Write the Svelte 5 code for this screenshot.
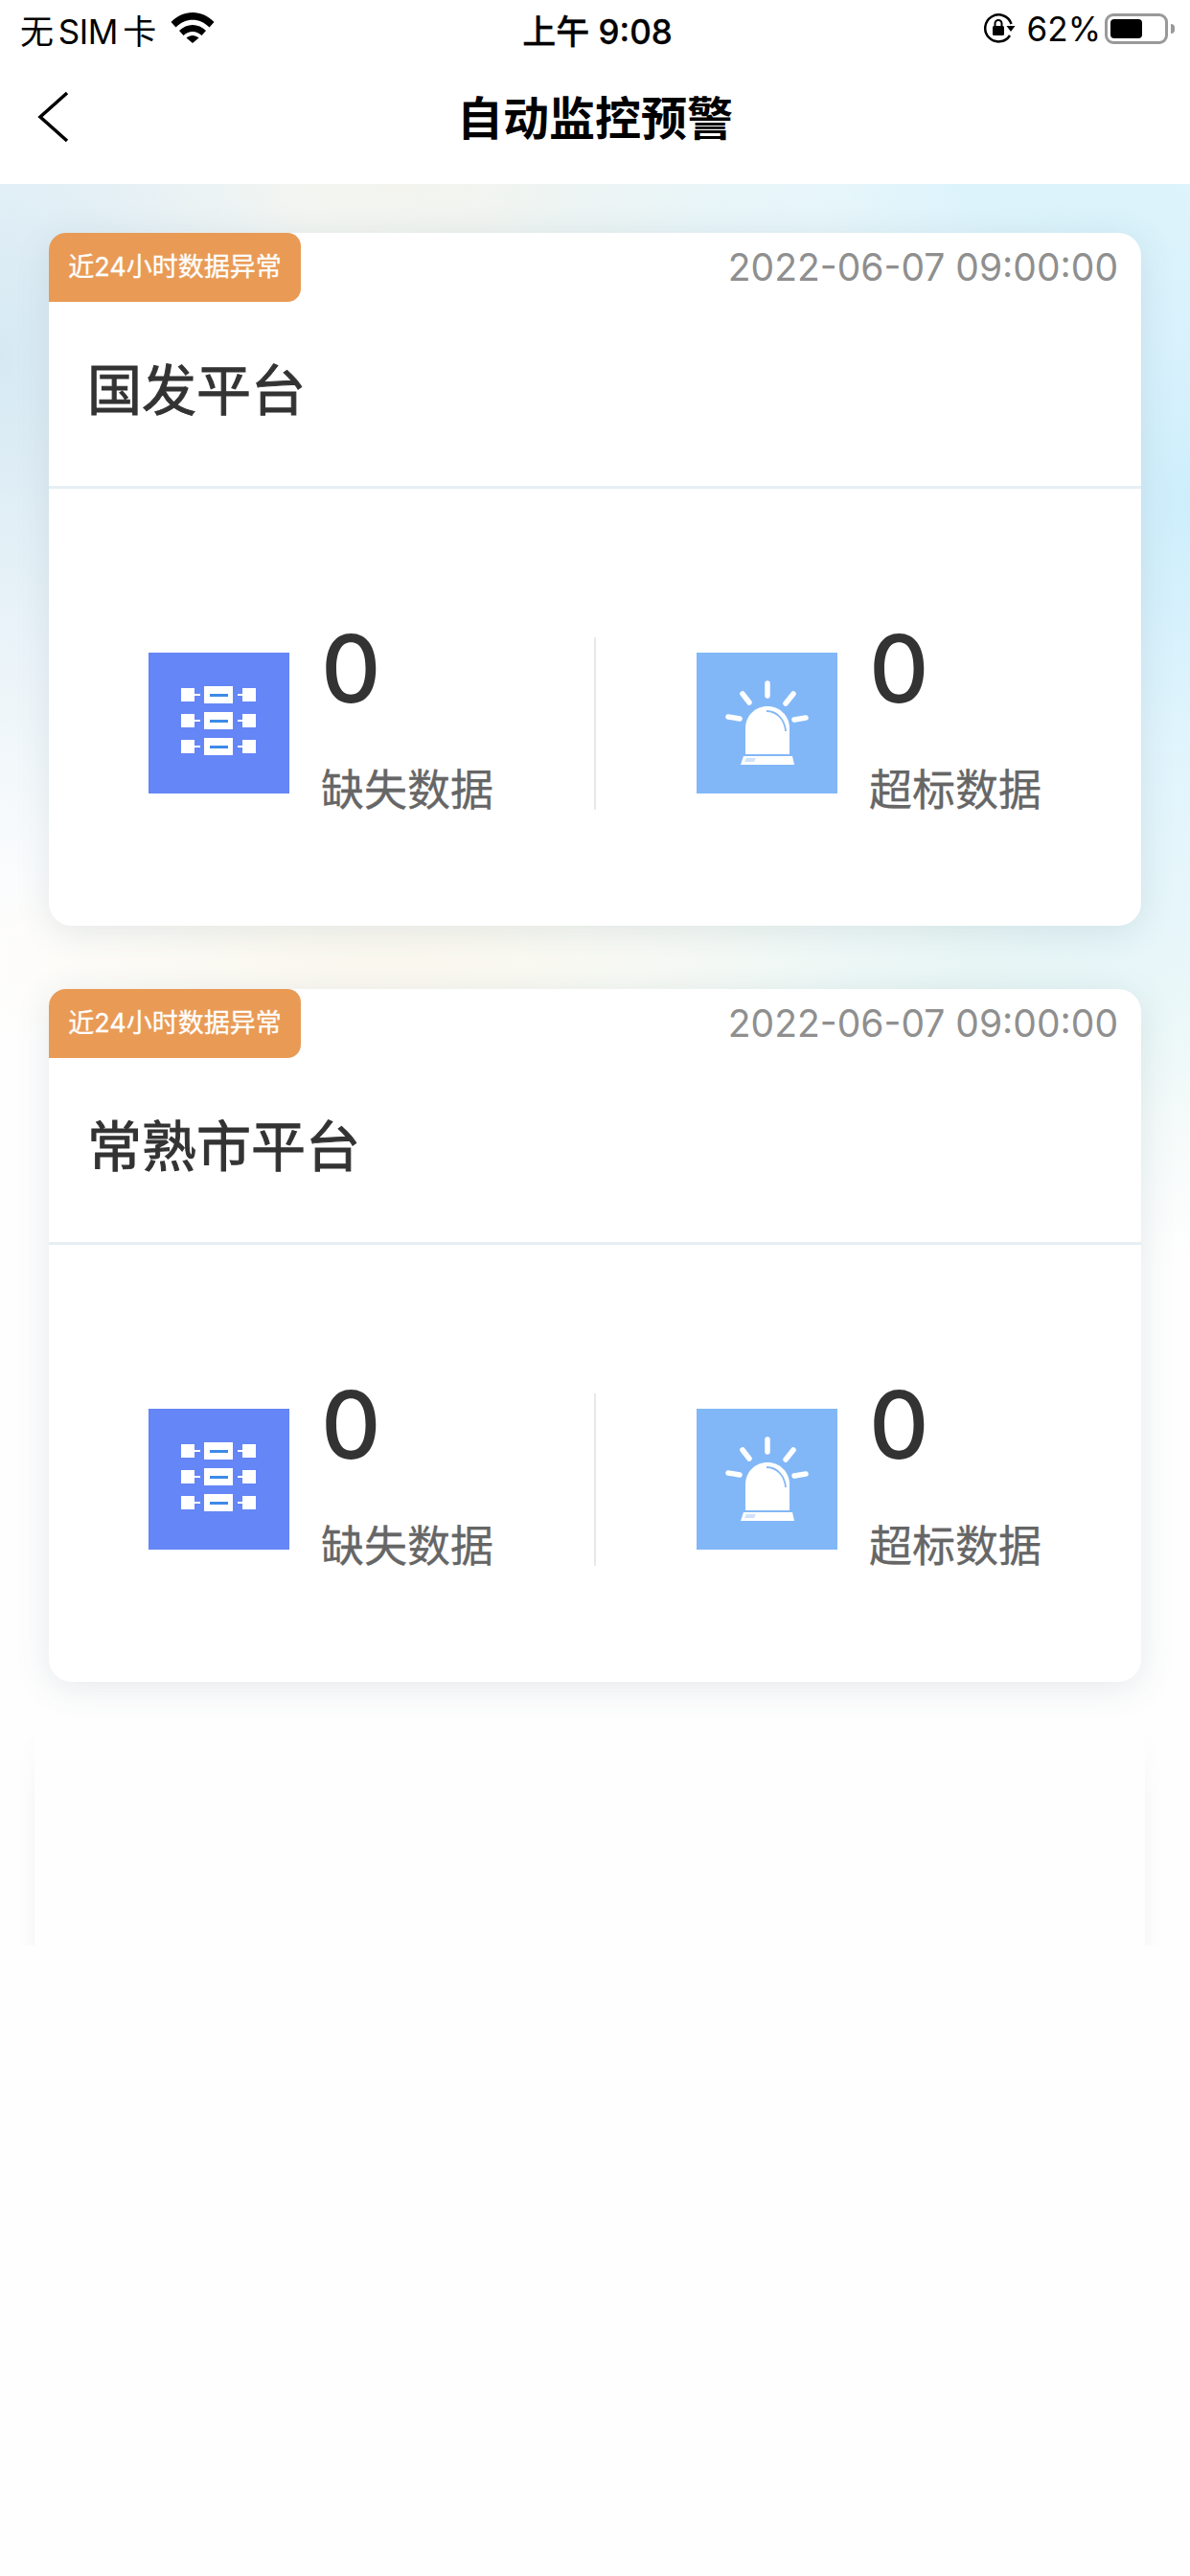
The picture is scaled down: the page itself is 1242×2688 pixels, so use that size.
<script>
	const cards = [{ name: '国发平台' }, { name: '常熟市平台' }];
</script>

<div class="page">
	<div class="statusbar">
		<div class="sb-left">
			<span class="carrier">无 SIM 卡</span>
			<svg class="wifi" width="46" height="33" viewBox="0 0 46 33">
				<path d="M0.500 11 C13 -2.500 33 -2.500 45.500 11 L40.500 16.500 C30.500 6 15.500 6 5.500 16.500 Z" />
				<path d="M9 20 C17 12 29 12 37 20 L32.500 25 C26.500 19.500 19.500 19.500 13.500 25 Z" />
				<path d="M16.500 27.500 C20.500 24 25.500 24 29.500 27.500 L23 33 Z" />
			</svg>
		</div>
		<div class="sb-time">上午 9:08</div>
		<div class="sb-right">
			<svg width="34" height="32" viewBox="0 0 34 32">
				<path d="M28 23 A14 14 0 1 1 29.500 11" fill="none" stroke="#000" stroke-width="2.500" />
				<path d="M24.500 13 L33.500 13 L29 19 Z" />
				<rect x="10" y="13" width="12" height="10" rx="1.500" />
				<path d="M12.500 13 V10.500 A3.500 3.500 0 0 1 19.500 10.500 V13" fill="none" stroke="#000" stroke-width="2" />
			</svg>
			<span class="pct">62%</span>
			<div class="battery"><div class="level"></div></div>
			<div class="nub"></div>
		</div>
	</div>

	<div class="navbar">
		<svg class="back" width="34" height="54" viewBox="0 0 34 54">
			<path d="M31 2 L3 27 L31 52" fill="none" stroke="#000" stroke-width="3.500" />
		</svg>
		<h1>自动监控预警</h1>
	</div>

	<div class="content">
		{#each cards as card}
			<div class="card">
				<div class="card-top">
					<div class="head-row">
						<span class="badge">近24小时数据异常</span>
						<span class="date">2022-06-07 09:00:00</span>
					</div>
					<div class="name">{card.name}</div>
				</div>
				<div class="stats">
					<div class="stat">
						<svg class="ico" width="147" height="147" viewBox="0 0 147 147">
							<rect width="147" height="147" fill="#6586f6" />
							{#each [37, 64, 91] as y}
								<rect x="34" y={y} width="14" height="14" fill="#fff" />
								<rect x="48" y={y + 6} width="6" height="2" fill="#fff" />
								<rect x="58" y={y - 2} width="30" height="18" fill="#fff" />
								<rect x="64" y={y + 6} width="19" height="3" fill="#3d8be8" />
								<rect x="93" y={y + 6} width="5" height="2" fill="#fff" />
								<rect x="98" y={y} width="14" height="14" fill="#fff" />
							{/each}
						</svg>
						<div class="nums">
							<div class="num">0</div>
							<div class="label">缺失数据</div>
						</div>
					</div>
					<div class="sep"></div>
					<div class="stat">
						<svg class="ico" width="147" height="147" viewBox="0 0 147 147">
							<rect width="147" height="147" fill="#82b7f7" />
							<path d="M51 106 V79 C51 66 61 56 74 56 C87 56 97 66 97 79 V106 Z" fill="#fff" />
							<path d="M73 61 C84 61 92 70 93 82" fill="none" stroke="#82b7f7" stroke-width="1.800" />
							<path d="M46 117 L49 108 H100 L102 117 Z" fill="#fff" />
							<path d="M50 114 L52 110 H62 L60 114 Z" fill="#cfe2fb" />
							<g stroke="#fff" stroke-width="5.500" stroke-linecap="round" fill="none">
								<path d="M74 32 V45" />
								<path d="M48 43 L55 52" />
								<path d="M101 43 L93 53" />
								<path d="M33 67 L45 69" />
								<path d="M114 68 L102 70" />
							</g>
						</svg>
						<div class="nums">
							<div class="num">0</div>
							<div class="label">超标数据</div>
						</div>
					</div>
				</div>
			</div>
		{/each}
		<div class="ghost-wrap"><div class="ghost"></div></div>
	</div>
</div>

<style>
	:global(body) {
		margin: 0;
		background: #fefefe;
	}
	.page {
		width: 1242px;
		height: 2688px;
		overflow: hidden;
		font-family: Inter, "Noto Sans CJK SC", sans-serif;
		background: #fefefe;
	}
	.statusbar {
		height: 60px;
		box-sizing: border-box;
		padding: 0 16px 0 21px;
		display: grid;
		grid-template-columns: 1fr auto 1fr;
		align-items: center;
		font-size: 35px;
		color: #000;
		background: #fff;
	}
	.sb-left {
		display: flex;
		align-items: center;
		gap: 15px;
	}
	.carrier {
		word-spacing: -4px;
		letter-spacing: -0.500px;
	}
	.wifi {
		margin-top: -3px;
	}
	.sb-time {
		font-weight: 500;
		word-spacing: 0;
		-webkit-text-stroke: 0.300px #000;
	}
	.sb-right {
		display: flex;
		align-items: center;
		justify-content: flex-end;
	}
	.pct {
		margin-left: 12px;
	}
	.battery {
		box-sizing: border-box;
		width: 66px;
		height: 32px;
		margin-left: 4px;
		border: 3px solid #999;
		border-radius: 9px;
		padding: 3px;
	}
	.level {
		width: 33px;
		height: 100%;
		background: #000;
		border-radius: 4px;
	}
	.nub {
		width: 4px;
		height: 10px;
		margin-left: 3px;
		background: #999;
		border-radius: 0 4px 4px 0;
	}
	.navbar {
		height: 132px;
		position: relative;
		display: flex;
		align-items: center;
		justify-content: center;
		background: #fff;
	}
	.back {
		position: absolute;
		left: 39px;
		top: 35px;
	}
	h1 {
		margin: 0 0 12px;
		font-size: 48px;
		font-weight: 700;
		color: #000;
	}
	.content {
		height: 2496px;
		box-sizing: border-box;
		padding: 51px 51px 0;
		display: flex;
		flex-direction: column;
		gap: 66px;
		position: relative;
		background:
			radial-gradient(ellipse 420px 640px at 1242px 330px, #cdeefc, rgba(205, 238, 252, 0)),
			radial-gradient(ellipse 330px 600px at 0px 180px, #d6e9f3, rgba(214, 233, 243, 0)),
			radial-gradient(ellipse 500px 260px at 1000px 0px, #e2f5fb, rgba(226, 245, 251, 0)),
			radial-gradient(ellipse 420px 130px at 420px 0px, #f3f4ee, rgba(243, 244, 238, 0)),
			radial-gradient(ellipse 500px 130px at 400px 810px, #faf8ee, rgba(250, 248, 238, 0)),
			radial-gradient(ellipse 560px 300px at 1000px 850px, #e8f6f4, rgba(232, 246, 244, 0)),
			radial-gradient(ellipse 700px 240px at 620px 60px, #e9f3f5, rgba(233, 243, 245, 0));
		background-repeat: no-repeat;
		background-size: 100% 1500px;
	}
	.card {
		width: 1140px;
		height: 723px;
		flex: none;
		background: #fff;
		border-radius: 24px;
		box-shadow: 0 6px 36px rgba(60, 90, 110, 0.13);
	}
	.card-top {
		height: 267px;
		box-sizing: border-box;
		border-bottom: 3px solid #e6eff4;
	}
	.head-row {
		display: flex;
		justify-content: space-between;
		align-items: flex-start;
	}
	.badge {
		box-sizing: border-box;
		width: 263px;
		height: 72px;
		background: #e99b56;
		border-radius: 18px 14px 14px 0;
		color: #fff;
		font-size: 27px;
		line-height: 72px;
		text-align: center;
		white-space: nowrap;
		-webkit-text-stroke: 0.300px #fff;
	}
	.date {
		margin: 16px 24px 0 0;
		font-size: 39px;
		line-height: 40px;
		color: #8f8f8f;
	}
	.name {
		margin: 61px 0 0 40px;
		font-size: 57px;
		line-height: 64px;
		color: #333;
		-webkit-text-stroke: 1px #333;
	}
	.stats {
		height: 456px;
		box-sizing: border-box;
		padding-top: 34px;
		display: grid;
		grid-template-columns: 1fr 2px 1fr;
		align-items: center;
	}
	.stat {
		display: flex;
		align-items: center;
		padding-left: 104px;
		gap: 33px;
	}
	.ico {
		margin-top: -2px;
	}
	.sep {
		height: 180px;
		background: #e6e8ea;
	}
	.stat:last-child {
		padding-left: 105px;
	}
	.nums {
		display: flex;
		flex-direction: column;
		margin-top: -13px;
	}
	.num {
		font-size: 97px;
		line-height: 100px;
		font-weight: 500;
		color: #333;
	}
	.label {
		margin-top: 52px;
		font-size: 45px;
		line-height: 50px;
		color: #666;
		-webkit-text-stroke: 0.300px #666;
	}
	.ghost-wrap {
		position: absolute;
		left: 0;
		top: 1613px;
		width: 1242px;
		height: 225px;
		overflow: hidden;
		mask-image: linear-gradient(transparent, #000 70px);
	}
	.ghost {
		margin: 0 47px 0 36px;
		height: 400px;
		background: #fefefe;
		box-shadow: 0 0 18px rgba(60, 90, 110, 0.07);
	}
</style>
